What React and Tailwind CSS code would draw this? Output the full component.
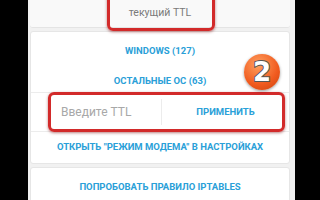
export default function App() {
  const linkCls = "text-[9.5px] font-bold uppercase text-[#2aa0d8]"

  return (
    <div className="flex h-[200px] w-[320px] overflow-hidden bg-black font-['Roboto',sans-serif]">
      <div className="w-[28px] shrink-0" />
      <div className="relative flex w-[267px] shrink-0 flex-col gap-[3px] bg-[#f1f1f1] pl-[2px] pr-[5px]">
        {/* current TTL card */}
        <div className="flex h-[28px] shrink-0 items-end justify-center rounded-b-[3px] border-b border-[#e4e4e4] bg-[#f9f9f9] pb-[6px]">
          <span className="text-[10.5px] text-[#7a7a7a]">текущий TTL</span>
        </div>

        {/* main card */}
        <div className="flex h-[133px] shrink-0 flex-col rounded-[3px] border border-[#e6e6e6] bg-white">
          <div className="flex h-[38px] items-center justify-center">
            <span className={linkCls}>Windows (127)</span>
          </div>
          <div className="flex h-[22px] items-center justify-center">
            <span className={linkCls}>Остальные ОС (63)</span>
          </div>
          <div className="flex h-[40px] items-center border-y border-[#ececec]">
            <div className="flex h-full w-[130px] items-center pl-[30px] text-[12px] text-[#a8a8a8]">Введите TTL</div>
            <div className="h-[26px] w-px bg-[#ececec]" />
            <div className="flex flex-1 items-center justify-center">
              <span className={linkCls}>Применить</span>
            </div>
          </div>
          <div className="flex flex-1 items-center justify-center">
            <span className={linkCls}>Открыть "режим модема" в настройках</span>
          </div>
        </div>

        {/* iptables card */}
        <div className="flex h-[40px] shrink-0 items-center justify-center rounded-[3px] border border-[#e6e6e6] bg-white">
          <span className={linkCls}>Попробовать правило iptables</span>
        </div>

        {/* annotations */}
        <div className="absolute left-[79px] top-[-10px] h-[41px] w-[108px] rounded-[6px] border-[3px] border-[#d22a2a] shadow-[0_1px_3px_rgba(120,0,0,0.5)]" />
        <div className="absolute left-[20px] top-[92px] h-[40px] w-[237px] rounded-[6px] border-[3px] border-[#d22a2a] shadow-[0_1px_3px_rgba(120,0,0,0.5)]" />
        <div className="absolute left-[216px] top-[54px] flex h-[36px] w-[36px] items-center justify-center rounded-full bg-[radial-gradient(circle_at_40%_30%,#ffa060,#f05a1e_60%,#c8420e)] shadow-[0_1px_3px_rgba(0,0,0,0.4)]">
          <span className="font-['DejaVu_Sans',sans-serif] text-[26px] font-bold leading-none text-white [-webkit-text-stroke:2px_#555] [paint-order:stroke_fill]">2</span>
        </div>
      </div>
      <div className="flex-1" />
    </div>
  )
}
